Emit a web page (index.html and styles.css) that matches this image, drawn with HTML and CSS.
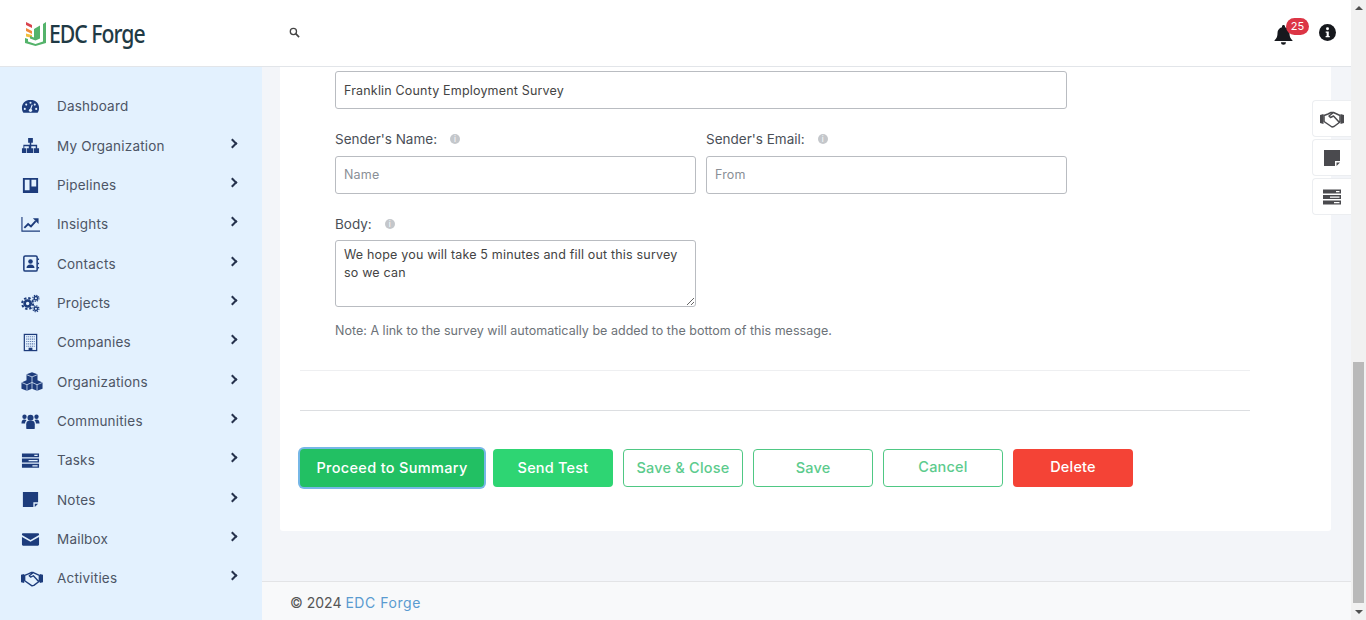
FILE: index.html
```html
<!DOCTYPE html>
<html lang="en">
<head>
<meta charset="utf-8">
<title>EDC Forge</title>
<link rel="stylesheet" href="styles.css">
</head>
<body>
<div class="page">
  <header class="topbar">
    <div class="brand">
      <svg class="brand-mark" viewBox="0 0 21 25"><path fill="#d9434e" d="M1 1l6 3v3L1 4z"/><path fill="#ee8a3a" d="M1 7l6 3v3l-6-3z"/><path fill="#f2bf3d" d="M1 12.500l6 1.500v3l-6-1.500z"/><path fill="#54b36b" d="M0 17l3 1v2.500l7.500 2.500 7.500-2.500V3l3-2v21l-10.500 3L0 22z"/><path fill="#54b36b" d="M9 8l6-3.500v13l-4.500 2L5 17.500V15l4 1.500z"/></svg>
      <span class="brand-name">EDC Forge</span>
    </div>
    <svg class="search" viewBox="0 0 12 12"><circle cx="4.800" cy="4.800" r="3.400" fill="none" stroke="#444" stroke-width="1.400"/><path d="M7.300 7.300l3.700 3.700" stroke="#444" stroke-width="1.800"/></svg>
    <div class="top-actions">
      <div class="bell-wrap">
        <svg class="bell" viewBox="0 0 18 20"><path fill="#16181d" d="M9 0c-.9 0-1.500.7-1.500 1.500v.7C4.600 2.900 3 5.300 3 8c0 4.500-1.500 5.700-3 7.500V16h18v-.5c-1.500-1.800-3-3-3-7.500 0-2.700-1.600-5.100-4.500-5.800v-.7C10.500.7 9.900 0 9 0zM6.500 17.300a2.500 2.500 0 0 0 5 0z"/></svg>
        <span class="badge">25</span>
      </div>
      <svg class="info" viewBox="0 0 16 16"><circle cx="8" cy="8" r="8" fill="#16181d"/><circle cx="8" cy="4.500" r="1.400" fill="#fff"/><path fill="#fff" d="M6.300 7h2.900v4.200h.9v1.300H6.200v-1.300h1V8.300h-.9z"/></svg>
    </div>
  </header>
  <div class="layout">
    <aside class="sidebar">
      <nav class="nav">
        <a class="nav-item"><svg class="nav-icon" viewBox="0 0 20 20"><path fill="#1d3c7c" d="M10 3C4.500 3 .8 7.200 1 12c0 1.500.5 3 1.300 4.200.2.300.5.400.8.400h13.800c.3 0 .6-.1.800-.4.800-1.200 1.300-2.700 1.300-4.200.2-4.800-3.500-9-9-9z"/><g fill="#e3f1fe"><circle cx="10" cy="6" r="1.100"/><circle cx="5.500" cy="8" r="1.100"/><circle cx="14.500" cy="8" r="1.100"/><circle cx="4" cy="12.500" r="1.100"/><circle cx="16" cy="12.500" r="1.100"/><circle cx="10" cy="14" r="1.700"/><path d="M9.300 13.500l2-5.500 1 .3-1.800 5.600z"/></g></svg><span>Dashboard</span></a>
        <a class="nav-item"><svg class="nav-icon" viewBox="0 0 20 20"><path fill="#1d3c7c" d="M7.500 2h5v5h-1.700v2.200H17V13h2v5h-5.500v-5h2v-2.200h-4.700V13h2v5H6.200v-5h2v-2.200H3.500V13h2v5H1v-5h1.500V9.200h6.700V7H7.500z"/></svg><span>My Organization</span><i class="chev"></i></a>
        <a class="nav-item"><svg class="nav-icon" viewBox="0 0 20 20"><path fill="#1d3c7c" fill-rule="evenodd" d="M2 2h16v16H2zM4 4v11h5V4zm7 0v7h5V4z"/></svg><span>Pipelines</span><i class="chev"></i></a>
        <a class="nav-item"><svg class="nav-icon" viewBox="0 0 20 20"><path fill="none" stroke="#1d3c7c" stroke-width="1.200" d="M1 2v15h19"/><path fill="none" stroke="#1d3c7c" stroke-width="2" d="M3.500 13.500l4-4 3 2.500 5-5.500"/><path fill="#1d3c7c" d="M12.500 3.500h6v6z"/></svg><span>Insights</span><i class="chev"></i></a>
        <a class="nav-item"><svg class="nav-icon" viewBox="0 0 20 20"><rect x="3" y="2" width="14" height="16" rx="1.500" fill="none" stroke="#1d3c7c" stroke-width="1.600"/><path stroke="#1d3c7c" stroke-width="1.500" d="M17.500 5.500h1.500M17.500 10h1.500M17.500 14.500h1.500"/><circle cx="10" cy="7.800" r="2.400" fill="#1d3c7c"/><path fill="#1d3c7c" d="M5.800 14.800c0-2.500 1.600-3.800 4.200-3.800s4.200 1.300 4.200 3.800z"/></svg><span>Contacts</span><i class="chev"></i></a>
        <a class="nav-item"><svg class="nav-icon" viewBox="0 0 20 20"><g fill="none" stroke="#1d3c7c"><circle cx="7" cy="10" r="3.200" stroke-width="2.800"/><circle cx="7" cy="10" r="5.700" stroke-width="2.200" stroke-dasharray="2.500 1.970"/><circle cx="15.700" cy="4.500" r="1.800" stroke-width="1.500"/><circle cx="15.700" cy="4.500" r="3.200" stroke-width="1.200" stroke-dasharray="1.400 1.100"/><circle cx="15.700" cy="15.500" r="1.800" stroke-width="1.500"/><circle cx="15.700" cy="15.500" r="3.200" stroke-width="1.200" stroke-dasharray="1.400 1.100"/></g></svg><span>Projects</span><i class="chev"></i></a>
        <a class="nav-item"><svg class="nav-icon" viewBox="0 0 20 20"><rect x="3.500" y="1.500" width="13" height="17" fill="none" stroke="#1d3c7c" stroke-width="1.300"/><path stroke="#5f7cb0" stroke-width="1.200" stroke-dasharray="1.200 .8" d="M5.500 4h9M5.500 6.500h9M5.500 9h9M5.500 11.500h9M5.500 14h9"/><rect x="8" y="15.500" width="4" height="3" fill="#1d3c7c"/></svg><span>Companies</span><i class="chev"></i></a>
        <a class="nav-item"><svg class="nav-icon org-wide" viewBox="0 0 24 20"><path fill="#1d3c7c" d="M12 0l6 2v6.500L23.500 11v7L17.500 20 12 18 6.500 20 .5 18v-7L6 8.500V2z"/><path fill="none" stroke="#e3f1fe" stroke-width=".8" d="M6 2.500l6 2.500 6-2.500M12 5v6M.5 11l6 2.500L12 11l5.500 2.500 6-2.500M6.500 13.500V20M17.500 13.500V20M12 11v7"/></svg><span>Organizations</span><i class="chev"></i></a>
        <a class="nav-item"><svg class="nav-icon" viewBox="0 0 20 20"><g fill="#1d3c7c"><circle cx="3.700" cy="5" r="2.300"/><circle cx="16.300" cy="5" r="2.300"/><circle cx="10" cy="6" r="3.200"/><path d="M.5 12c0-3 1-4.200 3-4.200 1 0 1.800.3 2.300.8-1 1-1.500 2-1.500 3.400zM19.500 12c0-3-1-4.200-3-4.200-1 0-1.800.3-2.300.8 1 1 1.500 2 1.500 3.400z"/><path d="M5.500 13c0-2.500 1.200-3.700 3-3.700h3c1.800 0 3 1.200 3 3.700v4c0 .6-.4 1-1 1h-7c-.6 0-1-.4-1-1z"/></g></svg><span>Communities</span><i class="chev"></i></a>
        <a class="nav-item"><svg class="nav-icon" viewBox="0 0 20 20"><path fill="#1d3c7c" d="M1 2.500h18v4H1zM1 8h18v4H1zM1 13.500h18v4H1z"/><path fill="#e3f1fe" d="M14 4h3.500v1.300H14zM8 9.500h9.500v1.300H8zM12 15h5.500v1.300H12z"/></svg><span>Tasks</span><i class="chev"></i></a>
        <a class="nav-item"><svg class="nav-icon" viewBox="0 0 20 20"><path fill="#1d3c7c" d="M2 2h16v11h-5v5H2z"/><path fill="#1d3c7c" d="M14.500 14.500H18L14.500 18z"/></svg><span>Notes</span><i class="chev"></i></a>
        <a class="nav-item"><svg class="nav-icon" viewBox="0 0 20 20"><path fill="#1d3c7c" d="M2.200 3.500h15.600c.7 0 1.200.5 1.200 1.200v.6l-9 5.200-9-5.200v-.6c0-.7.500-1.200 1.200-1.200zM1 7.300l9 5 9-5v8c0 .7-.5 1.200-1.200 1.200H2.200c-.7 0-1.200-.5-1.200-1.200z"/></svg><span>Mailbox</span><i class="chev"></i></a>
        <a class="nav-item"><svg class="nav-icon org-wide" viewBox="0 0 24 20"><path fill="#1d3c7c" d="M0 6l3.500-1v10L0 14zM24 6l-3.500-1v10L24 14z"/><path fill="none" stroke="#1d3c7c" stroke-width="1.500" stroke-linejoin="round" d="M4 6.500L8 5l3-1.500h2.500L20 6.500V13l-6 4.500-2 .5-8-5.500zM13.500 3.500L9 7l1.500 1.500 3-1.500 5.500 6"/></svg><span>Activities</span><i class="chev"></i></a>
      </nav>
    </aside>
    <div class="main">
      <main class="content">
        <section class="card">
          <form class="form">
            <input class="field" type="text" value="Franklin County Employment Survey">
            <div class="two-col">
              <div>
                <div class="label-row"><label>Sender's Name:</label><i class="hint">i</i></div>
                <input class="field field-empty" type="text" placeholder="Name">
              </div>
              <div>
                <div class="label-row"><label>Sender's Email:</label><i class="hint">i</i></div>
                <input class="field field-empty" type="text" placeholder="From">
              </div>
            </div>
            <div class="label-row body-label"><label>Body:</label><i class="hint">i</i></div>
            <textarea class="area">We hope you will take 5 minutes and fill out this survey so we can</textarea>
            <p class="note">Note: A link to the survey will automatically be added to the bottom of this message.</p>
          </form>
          <hr class="rule-light">
          <hr class="rule-dark">
          <div class="actions">
            <button type="button" class="btn btn-focus">Proceed to Summary</button>
            <button type="button" class="btn btn-green">Send Test</button>
            <button type="button" class="btn btn-outline">Save &amp; Close</button>
            <button type="button" class="btn btn-outline">Save</button>
            <button type="button" class="btn btn-outline btn-raised">Cancel</button>
            <button type="button" class="btn btn-red btn-raised">Delete</button>
          </div>
        </section>
      </main>
      <footer class="footer">© 2024 <a class="footer-link">EDC Forge</a></footer>
    </div>
  </div>
  <div class="side-tabs">
    <div class="side-tab"><svg class="tab-wide" viewBox="0 0 24 20"><path fill="#4a4a4e" d="M0 6l3.500-1v10L0 14zM24 6l-3.500-1v10L24 14z"/><path fill="none" stroke="#4a4a4e" stroke-width="1.500" stroke-linejoin="round" d="M4 6.500L8 5l3-1.500h2.500L20 6.500V13l-6 4.500-2 .5-8-5.500zM13.500 3.500L9 7l1.500 1.500 3-1.500 5.500 6"/></svg></div>
    <div class="side-tab"><svg viewBox="0 0 20 20"><path fill="#4a4a4e" d="M2 2h16v11h-5v5H2z"/><path fill="#4a4a4e" d="M14.500 14.500H18L14.500 18z"/></svg></div>
    <div class="side-tab"><svg viewBox="0 0 20 20"><path fill="#4a4a4e" d="M1 2.500h18v4H1zM1 8h18v4H1zM1 13.500h18v4H1z"/><path fill="#fff" d="M14 4h3.500v1.300H14zM8 9.500h9.500v1.300H8zM12 15h5.500v1.300H12z"/></svg></div>
  </div>
</div>
<div class="scrollbar">
  <i class="arrow-up"></i>
  <div class="track"><div class="thumb"></div></div>
  <i class="arrow-down"></i>
</div>
</body>
</html>
```
FILE: styles.css
```css
* { box-sizing: border-box; }
html, body { height: 620px; overflow: hidden; }
body {
  margin: 0;
  display: flex;
  font-family: "Inter", "Liberation Sans", sans-serif;
  color: #444;
  background: #f3f5f9;
}
.page {
  position: relative;
  flex: 1;
  min-width: 0;
  display: flex;
  flex-direction: column;
}
.topbar {
  height: 67px;
  flex: none;
  display: flex;
  align-items: center;
  background: #fff;
  border-bottom: 1px solid #e2e5e9;
}
.brand { width: 289px; padding-left: 25px; display: flex; align-items: center; }
.brand-mark { width: 21px; height: 25px; margin-right: 3px; flex: none; }
.brand-name {
  font-family: "Noto Sans", sans-serif;
  font-size: 25px;
  font-weight: 500;
  letter-spacing: -1.2px;
  color: #1f3a45;
  white-space: nowrap;
  transform: scaleX(.85);
  transform-origin: left center;
}
.search { width: 11px; height: 11px; margin-bottom: 2px; }
.top-actions { margin-left: auto; display: flex; align-items: center; padding-right: 15px; }
.bell-wrap { position: relative; width: 19px; height: 20px; margin-right: 26px; margin-top: 3px; }
.bell { width: 19px; height: 20px; display: block; }
.badge {
  position: absolute;
  left: 12px;
  top: -7px;
  width: 23px;
  height: 17px;
  border-radius: 9px;
  background: #dc3545;
  color: #fff;
  font-size: 11px;
  line-height: 17px;
  text-align: center;
}
.info { width: 17px; height: 17px; margin-bottom: 1px; }
.layout { flex: 1; display: flex; min-height: 0; }
.sidebar { width: 262px; flex: none; background: #e3f1fe; padding-top: 19.800px; }
.nav-item {
  height: 39.330px;
  display: flex;
  align-items: center;
  padding-left: 21px;
  font-size: 13.500px;
  letter-spacing: .2px;
  color: #4d5565;
}
.nav-icon { width: 19px; height: 19px; margin-right: 17px; flex: none; }
.org-wide { width: 22px; margin-right: 14px; }
.chev {
  width: 7px;
  height: 7px;
  border-top: 2px solid #26324d;
  border-right: 2px solid #26324d;
  transform: rotate(45deg);
  margin-left: auto;
  margin-right: 26px;
  margin-bottom: 5px;
}
.main { flex: 1; min-width: 0; display: flex; flex-direction: column; }
.content { flex: 1; padding: 0 20px 50px 18px; }
.card { height: 100%; background: #fff; padding: 4px 81px 0 20px; border-radius: 0 0 3px 3px; }
.form { padding-left: 35px; width: 767px; }
.field {
  display: block;
  width: 100%;
  height: 38px;
  padding: 0 8px;
  border: 1px solid #b9bcc1;
  border-radius: 3px;
  font: inherit;
  font-size: 12.500px;
  letter-spacing: .18px;
  color: #444;
  background: #fff;
}
.field-empty { padding-bottom: 2px; }
.field::placeholder { color: #8a8f96; opacity: 1; }
.two-col { display: grid; grid-template-columns: 361px 361px; gap: 10px; margin-top: 20px; }
.label-row { display: flex; align-items: center; height: 20px; margin-bottom: 7px; font-size: 13.500px; color: #4a4f57; }
.label-row label { margin-right: 13px; }
.hint {
  width: 10px;
  height: 10px;
  border-radius: 50%;
  background: #c4c7cb;
  color: #fff;
  font-size: 8px;
  font-style: normal;
  line-height: 10px;
  text-align: center;
}
.body-label { margin-top: 20px; margin-bottom: 6px; }
.area {
  display: block;
  width: 361px;
  height: 67px;
  padding: 5px 8px;
  border: 1px solid #b9bcc1;
  border-radius: 3px;
  font: inherit;
  font-size: 12.500px;
  letter-spacing: .18px;
  line-height: 18px;
  color: #444;
}
.note { margin: 13px 0 0; height: 20px; line-height: 21px; font-size: 12.500px; letter-spacing: .02px; color: #6d7278; }
.rule-light, .rule-dark { display: block; margin: 0; border: 0; height: 1px; }
.rule-light { margin-top: 30px; background: #eeeff1; }
.rule-dark { margin-top: 39px; background: #dcdee1; }
.actions { display: flex; gap: 10px; margin-top: 38px; }
.btn {
  width: 120px;
  height: 38px;
  padding: 0 0 2px;
  border: 1px solid transparent;
  border-radius: 4px;
  font: inherit;
  font-size: 14.500px;
  font-weight: 500;
  letter-spacing: .2px;
  background: #fff;
}
.btn-focus {
  width: 184px;
  margin-right: -1px;
  background: #22c063;
  color: #fff;
  letter-spacing: .33px;
  box-shadow: 0 0 0 2px #76b7e6;
  outline: none;
}
.btn-green { background: #2ed573; color: #fff; }
.btn-outline { border-color: #4fc884; color: #5ccb8d; }
.btn-red { background: #f44336; color: #fff; }
.btn-raised { padding-bottom: 4px; }
.footer {
  height: 39px;
  flex: none;
  padding-left: 28px;
  background: #f8f9fa;
  border-top: 1px solid #e3e4e6;
  font-size: 14px;
  line-height: 41px;
  color: #555;
}
.footer-link { color: #5a9bd0; letter-spacing: .55px; }
.side-tabs { position: absolute; right: 0; top: 100px; display: flex; flex-direction: column; gap: 2px; }
.side-tab {
  width: 39px;
  height: 37px;
  display: flex;
  align-items: center;
  justify-content: center;
  background: #fff;
  border: 1px solid #eceef1;
  border-right: 0;
  border-radius: 4px 0 0 4px;
}
.side-tab svg { width: 20px; height: 20px; }
.side-tab .tab-wide { width: 24px; }
.scrollbar { width: 15px; flex: none; display: flex; flex-direction: column; align-items: center; background: #f1f1f1; }
.arrow-up, .arrow-down { width: 0; height: 0; flex: none; border-left: 4px solid transparent; border-right: 4px solid transparent; }
.arrow-up { border-bottom: 4px solid #505050; margin: 6px 0 7px; }
.arrow-down { border-top: 4px solid #505050; margin: 7px 0 6px; }
.track { flex: 1; width: 100%; display: flex; flex-direction: column; align-items: center; }
.thumb { width: 11px; height: 241px; margin-top: 345px; background: #b9b9b9; }
```
